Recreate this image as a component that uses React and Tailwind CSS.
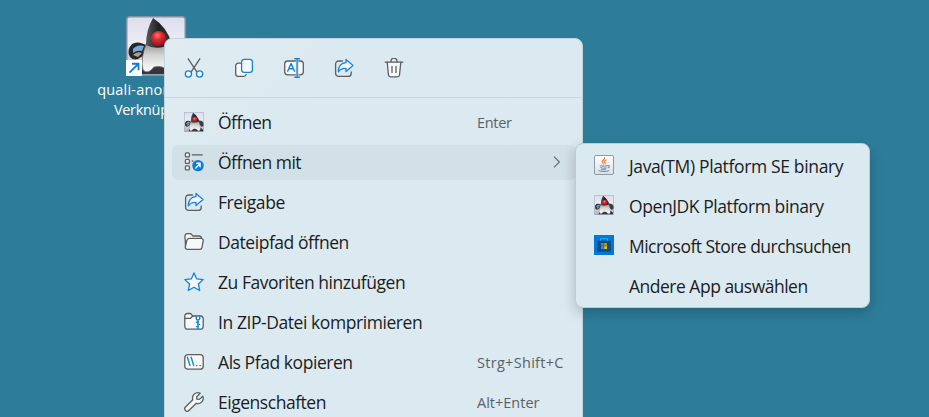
import React from "react";

const GREY = "#5c5e60";
const BLUE = "#1683d8";
const PAPER = "#f6f8fa";

function Icon({ children, className = "" }) {
  return (
    <svg
      viewBox="0 0 20 20"
      fill="none"
      strokeWidth="1.3"
      strokeLinecap="round"
      strokeLinejoin="round"
      className={`h-5 w-5 shrink-0 ${className}`}
    >
      {children}
    </svg>
  );
}

function Duke({ id, className }) {
  return (
    <svg viewBox="0 0 60 60" className={className}>
      <defs>
        <linearGradient id={`${id}-bg`} x1="0" y1="0" x2="0" y2="1">
          <stop offset="0" stopColor="#dcdeec" />
          <stop offset="0.5" stopColor="#eeeef6" />
          <stop offset="1" stopColor="#a9adc0" />
        </linearGradient>
        <linearGradient id={`${id}-body`} x1="0" y1="0" x2="0" y2="1">
          <stop offset="0" stopColor="#858585" />
          <stop offset="0.45" stopColor="#d4d4d4" />
          <stop offset="1" stopColor="#ffffff" />
        </linearGradient>
        <linearGradient id={`${id}-hat`} x1="0" y1="0" x2="1" y2="0">
          <stop offset="0" stopColor="#5a5a5a" />
          <stop offset="0.5" stopColor="#1f1f21" />
          <stop offset="1" stopColor="#3a3a3c" />
        </linearGradient>
        <radialGradient id={`${id}-nose`} cx="0.42" cy="0.3" r="0.7">
          <stop offset="0" stopColor="#f77" />
          <stop offset="0.4" stopColor="#df2a30" />
          <stop offset="1" stopColor="#941319" />
        </radialGradient>
      </defs>
      <rect x="0.75" y="0.75" width="58.5" height="58.5" rx="3" fill={`url(#${id}-bg)`} stroke="#8590a3" strokeWidth="1.5" />
      <path d="M14 56 Q18 46 24 48 L46 47 Q55 48 57 53 L57 58 L14 58Z" fill="#34363c" />
      <path d="M22 30 Q12 24 6 28 Q0 34 4 41 Q9 46 15 41 Q19 40 22 37Z" fill="#24272c" />
      <path d="M7 33 Q11 28 18 30 L16 35 Q11 34 7 37Z" fill="#77a9dc" />
      <path d="M7 39 Q11 35 16 37 L12 41Z" fill="#b89d80" />
      <path d="M42 26 Q57 24 59 36 Q59 46 52 44 Q48 38 42 37Z" fill="#3b3f45" />
      <path d="M21 26 Q14 42 17 54 Q22 59 28 51 Q38 49 42 56 Q50 58 49 47 Q47 34 43 25Z" fill={`url(#${id}-body)`} stroke="#62646a" strokeWidth="0.8" />
      <path d="M27 2 Q20 14 20 29 Q31 35 46 28 Q41 11 27 2Z" fill={`url(#${id}-hat)`} />
      <circle cx="32.6" cy="22.6" r="7.6" fill={`url(#${id}-nose)`} />
    </svg>
  );
}

function ShareIcon() {
  return (
    <Icon>
      <path d="M8.5 3H4.6A3 3 0 0 0 1.6 6v9.4a3 3 0 0 0 3 3h9.6a3 3 0 0 0 3-3V14" stroke={GREY} />
      <path d="M12 1.5 19 7.6 12 13.6V10.3C8.4 10.1 6 11.3 4.3 13.8 4.5 8.2 7.3 5 12 4.7Z" fill={PAPER} stroke={BLUE} />
    </Icon>
  );
}

function CutIcon() {
  return (
    <Icon>
      <path d="M4.2 .8 13 14.2M15.8 .8 7 14.2" stroke={GREY} />
      <circle cx="4.4" cy="16" r="3.1" fill={PAPER} stroke={BLUE} />
      <circle cx="15.6" cy="16" r="3.1" fill={PAPER} stroke={BLUE} />
    </Icon>
  );
}

function CopyIcon() {
  return (
    <Icon>
      <path d="M6.5 5.2H4.3A2.6 2.6 0 0 0 1.7 7.8v7.9a2.6 2.6 0 0 0 2.6 2.6h5.6a2.6 2.6 0 0 0 2.2-1.7" fill={PAPER} stroke={GREY} />
      <rect x="7.6" y="1.3" width="10.8" height="13" rx="2.6" fill={PAPER} stroke={BLUE} />
    </Icon>
  );
}

function RenameIcon() {
  return (
    <Icon>
      <path d="M11.4 3H3.6A3 3 0 0 0 .7 6v7.8a3 3 0 0 0 2.9 3h7.8M14.8 3h1.6a3 3 0 0 1 2.9 3v7.8a3 3 0 0 1-2.9 3h-1.6" fill={PAPER} stroke={GREY} />
      <path d="m3.7 13.2 3.2-7.5h.4l3.2 7.5M4.9 10.8h4.4M10.8 .7h4.6M10.8 19.2h4.6M13.1 .7v18.5" stroke={BLUE} strokeWidth="1.4" />
    </Icon>
  );
}

function TrashIcon() {
  return (
    <Icon>
      <path d="M3.2 4.2 4.5 17a2 2 0 0 0 2 1.8h7a2 2 0 0 0 2-1.8l1.3-12.8" fill={PAPER} stroke={GREY} />
      <path d="M1.3 4.2h17.4M7 4V3.2a3 3 0 0 1 6 0V4M8 8.4v6M12 8.4v6" stroke={GREY} />
    </Icon>
  );
}

function OpenWithIcon() {
  return (
    <Icon>
      <g stroke={GREY} fill={PAPER}>
        <rect x="1.4" y=".9" width="4" height="4" rx="1" />
        <rect x="1.4" y="7.4" width="4" height="4" rx="1" />
        <rect x="1.4" y="13.9" width="4" height="4" rx="1" />
        <path d="M8.3 2.8h10M8.3 9h.4" />
      </g>
      <circle cx="14" cy="13.6" r="5.7" fill="#0f7dd6" />
      <path d="m11.8 15.9 4.2-4.4M12.8 11.3h3.3v3.4" stroke="#fff" strokeWidth="1.4" />
    </Icon>
  );
}

function FolderIcon() {
  return (
    <Icon>
      <path d="M1.6 15.5 1 5V4a2.4 2.4 0 0 1 2.4-2.4h3L9 4h6a2.4 2.4 0 0 1 2.4 2.2" fill={PAPER} stroke={GREY} />
      <path d="M5.3 6.4h11.9a2 2 0 0 1 2 2.3l-1.2 6.7a2.4 2.4 0 0 1-2.4 2H3.2a2 2 0 0 1-1.9-2.3L2.8 8.5a2.6 2.6 0 0 1 2.5-2.1Z" fill={PAPER} stroke={GREY} />
    </Icon>
  );
}

function StarIcon() {
  return (
    <Icon>
      <path d="m10 .9 2.7 6 6.5.7-4.8 4.4 1.3 6.5L10 15.2l-5.7 3.3L5.6 12 .8 7.6l6.5-.7Z" fill={PAPER} stroke={BLUE} />
    </Icon>
  );
}

function ZipIcon() {
  return (
    <Icon>
      <path d="M.8 4.2A2.6 2.6 0 0 1 3.4 1.5h3.1L8.8 4h7.8a2.6 2.6 0 0 1 2.6 2.6v8a2.6 2.6 0 0 1-2.6 2.6H3.4a2.6 2.6 0 0 1-2.6-2.6Z" fill={PAPER} stroke={GREY} />
      <path d="M.8 6.3h5.7L8.8 4" stroke={GREY} />
      <path d="M12.3 4v2.4a1.7 1.7 0 0 0 3.4 0V4M14 8v9" stroke={BLUE} strokeWidth="1.4" />
      <path d="M12.4 10.2H14M14 12.4h1.6M12.4 14.6H14" stroke={BLUE} strokeWidth="1.4" />
    </Icon>
  );
}

function PathIcon() {
  return (
    <Icon>
      <rect x=".8" y="2.6" width="18.4" height="14.6" rx="3" fill={PAPER} stroke={GREY} />
      <path d="m3.4 5.2 2.5 8.2M7.2 5.2l2.5 8.2M12.4 13.6h.5M15.9 13.6h.5" stroke={BLUE} strokeWidth="1.4" />
    </Icon>
  );
}

function WrenchIcon() {
  return (
    <Icon>
      <path d="M16.2 1.3a5.3 5.3 0 0 0-7.4 6.4L1.5 15a2.4 2.4 0 0 0 3.4 3.5l7.4-7.2a5.3 5.3 0 0 0 6.5-7.1L15.4 7.4l-2.6-.2-.1-2.5Z" fill={PAPER} stroke={GREY} />
    </Icon>
  );
}

function JavaIcon() {
  return (
    <svg viewBox="0 0 20 20" fill="none" className="h-5 w-5 shrink-0">
      <defs>
        <linearGradient id="java-bg" x1="0" y1="0" x2="0" y2="1">
          <stop offset="0" stopColor="#fff" />
          <stop offset="1" stopColor="#dcdfe2" />
        </linearGradient>
      </defs>
      <rect x=".5" y=".5" width="19" height="19" rx="1.5" fill="url(#java-bg)" stroke="#8b9aaa" />
      <path d="M10.5 2.2C11.8 4.6 7 5.3 8.2 7.3L9.5 9.2M12.3 4.8c-2.3 1.2-2.2 2-.9 3.3L10.7 9.2" stroke="#e8792d" strokeWidth="1.1" />
      <path d="M5.8 10.4c2 .8 5.6.7 7.8.1M6.4 12.6c2 .7 4.6.7 6.4.1M13.6 10.7c2.5-.5 2.2 1.8.2 2.3M4.6 15.5c2.8 1.3 8.2 1.2 10.5 0M7 14.4c1.6.5 3.6.5 5 0" stroke="#7393b0" strokeWidth="1.1" />
    </svg>
  );
}

function StoreIcon() {
  return (
    <svg viewBox="0 0 20 20" className="h-5 w-5 shrink-0">
      <path fill="#0078d7" d="M0 0h20v20H0z" />
      <path d="M6.5 6V3.7h7V6" fill="none" stroke="#25b4f0" strokeWidth="1" />
      <path d="M3 5.8h14v9.4a1.6 1.6 0 0 1-1.6 1.6H4.6A1.6 1.6 0 0 1 3 15.2Z" fill="#124b83" />
      <path fill="#f25022" d="M7 8h2.8v2.8H7z" />
      <path fill="#7fba00" d="M10.2 8H13v2.8h-2.8z" />
      <path fill="#00a4ef" d="M7 11.2h2.8V14H7z" />
      <path fill="#ffb900" d="M10.2 11.2H13V14h-2.8z" />
    </svg>
  );
}

const toolbar = [CutIcon, CopyIcon, RenameIcon, ShareIcon, TrashIcon];

const items = [
  { icon: <Duke id="open" className="h-5 w-5 shrink-0" />, label: "Öffnen", track: "tracking-[-0.55px]", hint: "Enter", hintTrack: "tracking-[-0.3px]" },
  { icon: <OpenWithIcon />, label: "Öffnen mit", track: "tracking-[-0.5px]", active: true },
  { icon: <ShareIcon />, label: "Freigabe", track: "tracking-[-0.42px]" },
  { icon: <FolderIcon />, label: "Dateipfad öffnen", track: "tracking-[-0.45px]" },
  { icon: <StarIcon />, label: "Zu Favoriten hinzufügen", track: "tracking-[-0.46px]" },
  { icon: <ZipIcon />, label: "In ZIP-Datei komprimieren", track: "tracking-[-0.43px]" },
  { icon: <PathIcon />, label: "Als Pfad kopieren", track: "tracking-[-0.44px]", hint: "Strg+Shift+C", hintTrack: "tracking-[0.3px]" },
  { icon: <WrenchIcon />, label: "Eigenschaften", track: "tracking-[-0.47px]", hint: "Alt+Enter", hintTrack: "tracking-[0px]" },
];

const apps = [
  { icon: <JavaIcon />, label: "Java(TM) Platform SE binary", track: "tracking-[-0.35px]" },
  { icon: <Duke id="jdk" className="h-5 w-5 shrink-0" />, label: "OpenJDK Platform binary", track: "tracking-[-0.42px]" },
  { icon: <StoreIcon />, label: "Microsoft Store durchsuchen", track: "tracking-[-0.53px]" },
  { icon: <span className="h-5 w-5 shrink-0" />, label: "Andere App auswählen", track: "tracking-[-0.5px]" },
];

function DesktopShortcut() {
  return (
    <div className="absolute left-[96px] top-4 flex w-[120px] flex-col items-center">
      <div className="relative h-[60px] w-[60px]">
        <Duke id="desktop" className="h-full w-full" />
        <svg viewBox="0 0 16 16" className="absolute bottom-0 left-0 h-4 w-4">
          <path fill="#fff" d="M0 0h16v16H0z" />
          <path d="M3.5 12.7 12 4.2M6 3.7h6.5v6.5" fill="none" stroke="#147dcf" strokeWidth="1.9" />
        </svg>
      </div>
      <div className="mt-1 whitespace-nowrap text-center text-[14.5px] leading-5 text-white">
        <div className="tracking-[0.2px]">quali-anonym.jar</div>
        <div className="tracking-[-0.3px]">Verknüpfung</div>
      </div>
    </div>
  );
}

function ContextMenu() {
  return (
    <div className="absolute left-[164px] top-[38px] h-[400px] w-[419px] rounded-lg border border-[#c3d3da] bg-[#dbe9f0] bg-linear-to-br from-[#e0ecf1] to-[#dbe9f0] to-25%">
      <div className="flex h-[59px] items-center gap-[30px] border-b border-[#c8d7de] pl-[19px]">
        {toolbar.map((Glyph, i) => (
          <Glyph key={i} />
        ))}
      </div>
      <div className="flex flex-col pl-[7px] pt-[4px]">
        {items.map((item) => (
          <div key={item.label} className="flex h-10 items-center">
            <div className={`flex h-[35px] w-[404px] items-center rounded-md pl-3 ${item.active ? "bg-[#d2e0e7]" : ""}`}>
              {item.icon}
              <span className={`ml-3.5 w-[259px] whitespace-nowrap text-[17.5px] leading-6 ${item.track}`}>{item.label}</span>
              {item.hint && (
                <span className={`whitespace-nowrap pt-0.5 text-[14.5px] text-[#5a6266] ${item.hintTrack}`}>{item.hint}</span>
              )}
              {item.active && (
                <svg viewBox="0 0 8 12" className="ml-[76px] h-3 w-2" fill="none" stroke="#60686e" strokeWidth="1.1">
                  <path d="m1 .7 5.4 5.3L1 11.3" />
                </svg>
              )}
            </div>
          </div>
        ))}
      </div>
    </div>
  );
}

function OpenWithMenu() {
  return (
    <div className="absolute left-[575px] top-[143px] flex h-[165px] w-[295px] flex-col rounded-lg border border-[#b9cdd5] bg-[#dbe9f0] pl-[18px] pt-px shadow-[0_5px_14px_rgba(0,0,0,0.2)]">
      {apps.map((app) => (
        <div key={app.label} className="flex h-10 shrink-0 items-center">
          {app.icon}
          <span className={`ml-[15px] whitespace-nowrap pt-0.5 text-[17.5px] leading-6 ${app.track}`}>{app.label}</span>
        </div>
      ))}
    </div>
  );
}

export default function App() {
  return (
    <div className="relative h-[417px] w-[929px] overflow-hidden bg-[#2d7d9a] font-['Open_Sans','Noto_Sans',sans-serif] text-[#1b1d1e]">
      <DesktopShortcut />
      <ContextMenu />
      <OpenWithMenu />
    </div>
  );
}
